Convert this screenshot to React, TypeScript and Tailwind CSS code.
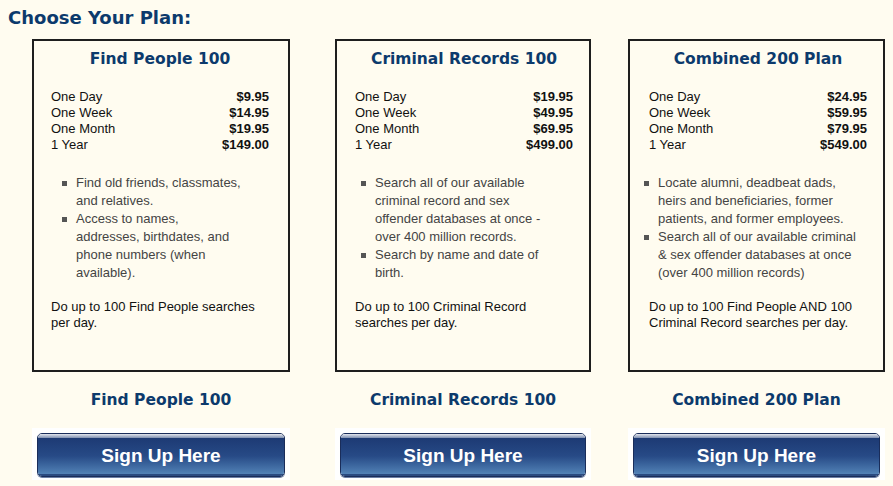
import React from "react";

interface IPlan {
    name: string;
    prices: [string, string][];
    features: string[];
    note: string;
    listClass: string;
    boxPad: string;
    colClass: string;
}

const plans: IPlan[] = [
    {
        name: "Find People 100",
        prices: [["One Day", "$9.95"], ["One Week", "$14.95"], ["One Month", "$19.95"], ["1 Year", "$149.00"]],
        features: [
            "Find old friends, classmates, and relatives.",
            "Access to names, addresses, birthdates, and phone numbers (when available).",
        ],
        note: "Do up to 100 Find People searches per day.",
        listClass: "ml-[25px] w-[167px]",
        boxPad: "pl-[17px] pr-[19px]",
        colClass: "ml-[32px] w-[258px]",
    },
    {
        name: "Criminal Records 100",
        prices: [["One Day", "$19.95"], ["One Week", "$49.95"], ["One Month", "$69.95"], ["1 Year", "$499.00"]],
        features: [
            "Search all of our available criminal record and sex offender databases at once - over 400 million records.",
            "Search by name and date of birth.",
        ],
        note: "Do up to 100 Criminal Record searches per day.",
        listClass: "ml-[20px] w-[170px]",
        boxPad: "pl-[18px] pr-[16px]",
        colClass: "ml-[45px] w-[256px]",
    },
    {
        name: "Combined 200 Plan",
        prices: [["One Day", "$24.95"], ["One Week", "$59.95"], ["One Month", "$79.95"], ["1 Year", "$549.00"]],
        features: [
            "Locate alumni, deadbeat dads, heirs and beneficiaries, former patients, and former employees.",
            "Search all of our available criminal & sex offender databases at once (over 400 million records)",
        ],
        note: "Do up to 100 Find People AND 100 Criminal Record searches per day.",
        listClass: "ml-[9px] w-[200px]",
        boxPad: "pl-[19px] pr-[16px]",
        colClass: "ml-[37px] w-[257px]",
    },
];

const SignUpButton = () => {
    return (
        <div className="bg-white px-[5px] pt-[5px] pb-[3px]">
            <div className="h-[44px] rounded-[5px] border border-[#1a2d5a] overflow-hidden flex flex-col shadow-[0_1px_0_#6b7fa6]">
                <div className="h-[4px] bg-gradient-to-b from-[#e4e7ee] to-[#7f8fb0]"></div>
                <div className="flex-1 flex items-center justify-center bg-gradient-to-b from-[#1d3a74] via-[#274a86] to-[#5282b6]">
                    <span className="text-white font-bold text-[19px] font-['Liberation_Sans',Arial,sans-serif] leading-none -mt-[2px]">
                        Sign Up Here
                    </span>
                </div>
                <div className="h-[2px] bg-[#2a4a80]"></div>
            </div>
        </div>
    );
};

const PlanColumn: React.FC<{ plan: IPlan }> = ({ plan }) => {
    return (
        <div className={`${plan.colClass} flex flex-col`}>
            <div className={`h-[333px] border-2 border-[#1e1e1e] bg-[#fffcf0] pt-[7px] ${plan.boxPad}`}>
                <h2 className="text-center font-['DejaVu_Sans',Verdana,sans-serif] font-bold text-[15.5px] text-[#0c3a6c] leading-[22px]">
                    {plan.name}
                </h2>
                <div className="mt-[19px] font-['Liberation_Sans',Arial,sans-serif] text-[13px] leading-[16px] text-[#111]">
                    {plan.prices.map(([label, price]) => (
                        <div key={label} className="flex justify-between">
                            <span>{label}</span>
                            <span className="font-bold">{price}</span>
                        </div>
                    ))}
                </div>
                <ul className={`mt-[21px] ${plan.listClass} font-['Liberation_Sans',Arial,sans-serif] text-[13px] leading-[18px] text-[#444]`}>
                    {plan.features.map((item, index) => (
                        <li key={index} className="relative">
                            <span className="absolute left-[-14px] top-[7px] w-[5px] h-[5px] bg-[#555]"></span>
                            {item}
                        </li>
                    ))}
                </ul>
                <p className="mt-[17px] font-['Liberation_Sans',Arial,sans-serif] text-[13px] leading-[16px] text-[#111]">
                    {plan.note}
                </p>
            </div>
            <h3 className="mt-[17px] text-center font-['DejaVu_Sans',Verdana,sans-serif] font-bold text-[15.5px] text-[#0c3a6c] leading-[22px]">
                {plan.name}
            </h3>
            <div className="mt-[17px]">
                <SignUpButton />
            </div>
        </div>
    );
};

export default function App() {
    return (
        <div className="w-[893px] h-[486px] bg-[#fffcf0] overflow-hidden">
            <h1 className="pl-[8px] pt-[7px] font-['DejaVu_Sans',Verdana,sans-serif] font-bold text-[18px] leading-[22px] text-[#0c3a6c]">
                Choose Your Plan:
            </h1>
            <div className="flex mt-[10px]">
                {plans.map((plan) => (
                    <PlanColumn key={plan.name} plan={plan} />
                ))}
            </div>
        </div>
    );
}
